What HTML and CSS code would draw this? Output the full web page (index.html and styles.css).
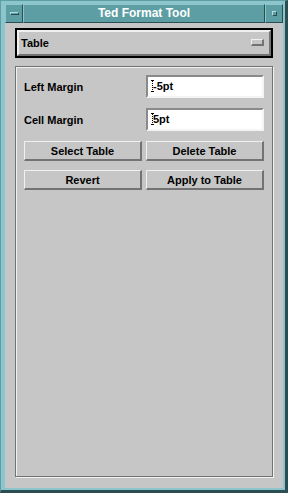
FILE: index.html
```html
<!DOCTYPE html>
<html lang="en">
<head>
  <meta charset="UTF-8" />
  <meta name="viewport" content="width=device-width, initial-scale=1.0"/>
  <title>Ted Format Tool</title>
  <link rel="stylesheet" href="styles.css">
</head>
<body>

  <div class="window">

    <div class="titlebar">
      <div class="tb-button"><span class="min-icon"></span></div>
      <div class="title">Ted Format Tool</div>
      <div class="tb-button"><span class="max-icon"></span></div>
    </div>

    <div class="client">

      <!-- page / table / row option menu -->
      <div class="option-menu">
        <div class="option-inner">
          <span class="option-label">Table</span>
          <span class="option-indicator"></span>
        </div>
      </div>

      <div class="frame">
        <div class="field-row">
          <label>Left Margin</label>
          <div class="text-field"><span class="cursor"></span>-5pt</div>
        </div>
        <div class="field-row">
          <label>Cell Margin</label>
          <div class="text-field"><span class="cursor"></span>5pt</div>
        </div>

        <div class="button-row first">
          <button>Select Table</button>
          <button>Delete Table</button>
        </div>
        <div class="button-row">
          <button>Revert</button>
          <button>Apply to Table</button>
        </div>
      </div>

    </div>
  </div>

</body>
</html>
```

FILE: styles.css
```css
body {
  margin: 0;
  background: #c6c6c6;
  font-family: "Liberation Sans", Arial, sans-serif;
  font-weight: bold;
  font-size: 11px;
  color: #000;
}

.window {
  width: 288px;
  height: 493px;
  box-sizing: border-box;
  display: flex;
  flex-direction: column;
  background: #8cc5cb;
  border-style: solid;
  border-width: 1px 3px 3px 1px;
  border-color: #5d9ea5 #2b4e52 #2b4e52 #5d9ea5;
  padding: 3px 2px 2px 4px;
}

/* title bar */

.titlebar {
  display: flex;
  height: 19px;
}

.tb-button,
.title {
  box-sizing: border-box;
  background: #5d9ea5;
  border: 1px solid;
  border-color: #8cc5cb #2b4e52 #2b4e52 #8cc5cb;
}

.tb-button {
  width: 18px;
  display: flex;
  align-items: center;
  justify-content: center;
}

.title {
  flex: 1;
  color: #fff;
  font-size: 12px;
  text-align: center;
  line-height: 17px;
}

.min-icon {
  width: 9px;
  height: 3px;
  box-sizing: border-box;
  border: 1px solid;
  border-color: #b4dde1 #2b4e52 #2b4e52 #b4dde1;
  margin-top: -1px;
}

.max-icon {
  width: 5px;
  height: 5px;
  box-sizing: border-box;
  border: 1px solid;
  border-color: #b4dde1 #2b4e52 #2b4e52 #b4dde1;
  margin-top: -1px;
}

/* client area */

.client {
  flex: 1;
  background: #c6c6c6;
  padding: 5px 10px 0 10px;
}

.option-menu {
  height: 30px;
  box-sizing: border-box;
  border: 2px solid #000;
}

.option-inner {
  height: 100%;
  box-sizing: border-box;
  border: 2px solid;
  border-color: #f0f0f0 #737373 #737373 #f0f0f0;
  display: flex;
  align-items: center;
  justify-content: space-between;
  padding: 0 5px 0 2px;
}

.option-label {
  padding-bottom: 1px;
}

.option-indicator {
  width: 13px;
  height: 7px;
  box-sizing: border-box;
  border-style: solid;
  border-width: 1px 2px 2px 1px;
  border-color: #f0f0f0 #737373 #737373 #f0f0f0;
  margin-top: -1px;
}

.frame {
  margin-top: 8px;
  height: 411px;
  box-sizing: border-box;
  border: 1px solid #737373;
  box-shadow: inset 1px 1px 0 #f0f0f0, 1px 1px 0 #f0f0f0;
  padding: 8px 8px 0 8px;
}

.field-row {
  display: flex;
  align-items: center;
  justify-content: space-between;
  margin-bottom: 10px;
}

.field-row label {
  padding-top: 1px;
}

.text-field {
  position: relative;
  width: 118px;
  height: 23px;
  box-sizing: border-box;
  background: #fff;
  border: 2px solid;
  border-color: #8a8a8a #f4f4f4 #f4f4f4 #8a8a8a;
  padding-left: 5px;
  line-height: 19px;
}

.cursor {
  position: absolute;
  left: 3px;
  top: 3px;
  width: 3px;
  height: 12px;
}

.cursor::before {
  content: "";
  position: absolute;
  left: 1px;
  top: 0;
  height: 12px;
  border-left: 1px dotted #000;
}

.cursor::after {
  content: "";
  position: absolute;
  left: 0;
  top: 0;
  width: 3px;
  height: 10px;
  border-top: 1px solid #000;
  border-bottom: 1px solid #000;
}

.button-row {
  display: flex;
  gap: 4px;
  margin-top: 9px;
}

.button-row.first {
  margin-top: 0;
}

.button-row button {
  width: 118px;
  height: 20px;
  box-sizing: border-box;
  padding: 0;
  font-family: inherit;
  font-weight: bold;
  font-size: 11px;
  color: #000;
  background: #c6c6c6;
  border-style: solid;
  border-width: 1px 2px 2px 1px;
  border-color: #f0f0f0 #737373 #737373 #f0f0f0;
}
```
